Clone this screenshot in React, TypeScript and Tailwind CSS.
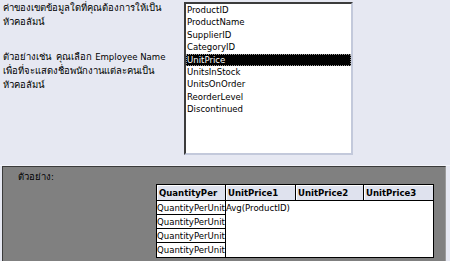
const fields = [
  'ProductID',
  'ProductName',
  'SupplierID',
  'CategoryID',
  'UnitPrice',
  'UnitsInStock',
  'UnitsOnOrder',
  'ReorderLevel',
  'Discontinued',
];

const headers = [
  { label: 'QuantityPer', w: 'w-[69px]' },
  { label: 'UnitPrice1', w: 'w-[70px]' },
  { label: 'UnitPrice2', w: 'w-[68px]' },
  { label: 'UnitPrice3', w: 'flex-1' },
];

export default function App() {
  return (
    <div className="w-[450px] h-[261px] overflow-hidden bg-[#e6e8f2] flex flex-col font-['DejaVu_Sans_Condensed','Liberation_Sans',sans-serif] text-[9.5px] text-black">
      {/* ส่วนบน: คำอธิบาย + รายการเขตข้อมูล */}
      <div className="h-[165px] flex shrink-0">
        <div className="w-[184px] pl-[3px] pt-[1px] leading-[14px]">
          <p>
            ค่าของเขตข้อมูลใดที่คุณต้องการให้เป็น
            <br />
            หัวคอลัมน์
          </p>
          <p className="mt-[21px]">
            ตัวอย่างเช่น&nbsp; คุณเลือก Employee Name
            <br />
            เพื่อที่จะแสดงชื่อพนักงานแต่ละคนเป็น
            <br />
            หัวคอลัมน์
          </p>
        </div>
        <div className="mt-[2px] w-[169px] h-[153px] border-2 border-t-[#3c3c3c] border-l-[#3c3c3c] border-r-[#c3c9db] border-b-[#c3c9db] bg-white">
          {fields.map((f) => (
            <div
              key={f}
              className={
                f === 'UnitPrice'
                  ? 'h-[12.4px] leading-[12.4px] pl-[1px] bg-black text-white outline-1 outline-dotted outline-[#9a9a9a] -outline-offset-1'
                  : 'h-[12.4px] leading-[12.4px] pl-[1px]'
              }
            >
              {f}
            </div>
          ))}
        </div>
      </div>

      {/* ส่วนล่าง: ตัวอย่าง */}
      <div className="flex-1 border-t border-[#f3f4fa]">
        <div className="h-full ml-[2px] mr-[4px] bg-[#808080] border-t border-l border-[#3a3a3a] border-r border-r-[#9c9c9c]">
          <div className="pl-[15px] pt-[4px] leading-[11px]">ตัวอย่าง:</div>
          <div className="ml-[153px] mt-[2px] w-[278px] border border-black bg-white">
            <div className="flex h-[16px] border-b border-black bg-[#dfe2ee] font-bold leading-[15px]">
              {headers.map((h, i) => (
                <div
                  key={h.label}
                  className={
                    (i < 3 ? 'border-r border-black ' : '') +
                    h.w +
                    ' px-[2px] shadow-[inset_1px_1px_0_#ffffff]'
                  }
                >
                  {h.label}
                </div>
              ))}
            </div>
            <div className="flex">
              <div className="w-[69px] border-r border-black">
                {[0, 1, 2, 3].map((r) => (
                  <div
                    key={r}
                    className={
                      (r < 3 ? 'border-b border-black ' : '') +
                      'h-[14px] leading-[13px] overflow-hidden whitespace-nowrap'
                    }
                  >
                    QuantityPerUnit
                  </div>
                ))}
              </div>
              <div className="flex-1 leading-[13px]">Avg(ProductID)</div>
            </div>
          </div>
        </div>
      </div>
    </div>
  );
}
